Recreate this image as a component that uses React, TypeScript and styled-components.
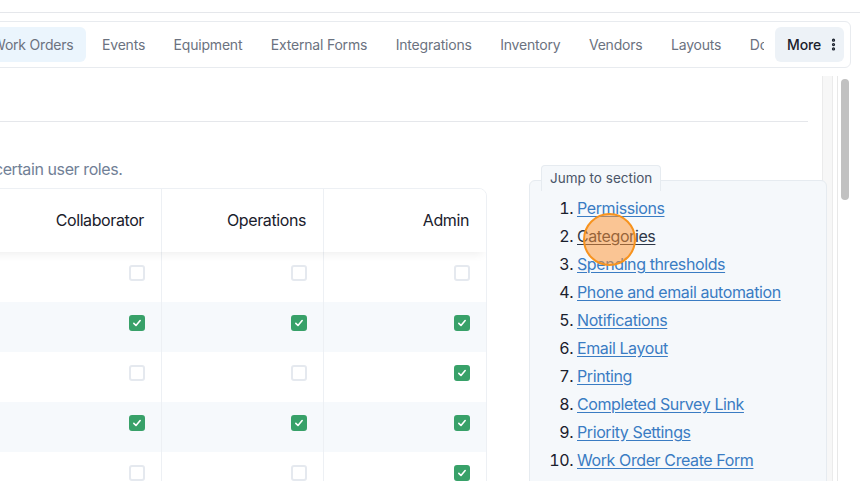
import styled, { createGlobalStyle } from "styled-components";
import { EllipsisVertical } from "lucide-react";

const GlobalStyle = createGlobalStyle`
  html, body {
    margin: 0;
    padding: 0;
    background: #ffffff;
    font-family: Inter, "Liberation Sans", sans-serif;
    letter-spacing: -0.4px;
    -webkit-font-smoothing: antialiased;
  }
`;

const tabs = [
  "Work Orders",
  "Events",
  "Equipment",
  "External Forms",
  "Integrations",
  "Inventory",
  "Vendors",
  "Layouts",
  "Documents",
];

const roles = ["Requester", "Collaborator", "Operations", "Admin"];

const permissions: { name: string; values: boolean[] }[] = [
  { name: "Assign work orders", values: [false, false, false, false] },
  { name: "View all work orders", values: [false, true, true, true] },
  { name: "Delete work orders", values: [false, false, false, true] },
  { name: "Edit work order details", values: [false, true, true, true] },
  { name: "Manage categories", values: [false, false, false, true] },
];

const sections = [
  "Permissions",
  "Categories",
  "Spending thresholds",
  "Phone and email automation",
  "Notifications",
  "Email Layout",
  "Printing",
  "Completed Survey Link",
  "Priority Settings",
  "Work Order Create Form",
];

export default function App() {
  return (
    <Root>
      <GlobalStyle />
      <TopLine />
      <TabBar>
        <TabList>
          {tabs.map((t, i) => (
            <Tab key={t} $active={i === 0}>
              {t}
            </Tab>
          ))}
        </TabList>
        <MoreButton>
          More
          <EllipsisVertical size={15} strokeWidth={3.2} />
        </MoreButton>
      </TabBar>

      <ContentRow>
        <Main>
          <Scroller>
            <Header>
              <Title>Settings</Title>
            </Header>
            <Body>
              <LeftColumn>
                <Description>
                  Configure which actions on the work order flow are available to certain user roles.
                </Description>
                <TableCard>
                  <HeaderRow>
                    <HeadCell $align="left">Permission</HeadCell>
                    {roles.map((r) => (
                      <HeadCell key={r} $align="right">
                        {r}
                      </HeadCell>
                    ))}
                  </HeaderRow>
                  {permissions.map((p, i) => (
                    <Row key={p.name} $striped={i % 2 === 1}>
                      <NameCell>{p.name}</NameCell>
                      {p.values.map((v, j) => (
                        <CheckCell key={j}>
                          <Checkbox $checked={v}>
                            {v && (
                              <svg width="10" height="10" viewBox="0 0 12 12">
                                <polyline
                                  points="2.2,6.4 4.8,9 9.8,3"
                                  fill="none"
                                  stroke="#ffffff"
                                  strokeWidth="1.9"
                                  strokeLinecap="round"
                                  strokeLinejoin="round"
                                />
                              </svg>
                            )}
                          </Checkbox>
                        </CheckCell>
                      ))}
                    </Row>
                  ))}
                </TableCard>
              </LeftColumn>

              <Sidebar>
                <JumpLabel>Jump to section</JumpLabel>
                <JumpBox>
                  <SectionList>
                    {sections.map((s, i) => (
                      <SectionItem key={s}>
                        <SectionLink href="#" $hover={i === 1}>
                          {s}
                        </SectionLink>
                      </SectionItem>
                    ))}
                  </SectionList>
                </JumpBox>
              </Sidebar>
            </Body>
          </Scroller>
        </Main>
        <ScrollTrack>
          <ScrollThumb />
        </ScrollTrack>
      </ContentRow>

      <CursorHalo />
    </Root>
  );
}

const Root = styled.div`
  position: relative;
  width: 860px;
  height: 481px;
  overflow: hidden;
  display: flex;
  flex-direction: column;
`;

const TopLine = styled.div`
  height: 12px;
  border-bottom: 1px solid #e5e7eb;
  flex: none;
`;

const TabBar = styled.div`
  flex: none;
  display: flex;
  align-items: center;
  margin: 8px 9px 0 -26px;
  padding: 5px 6px 5px 5px;
  border: 1px solid #e8ebef;
  border-radius: 6px;
  background: #ffffff;
`;

const TabList = styled.div`
  flex: 1;
  min-width: 0;
  display: flex;
  gap: 4.5px;
  overflow: hidden;
  white-space: nowrap;
  margin-right: 11px;
`;

const Tab = styled.div<{ $active?: boolean }>`
  flex: none;
  height: 35px;
  display: flex;
  align-items: center;
  padding: 0 12px;
  border-radius: 6px;
  font-size: 14px;
  letter-spacing: -0.2px;
  color: #6b7280;
  background: ${({ $active }) => ($active ? "#ebf5fd" : "transparent")};
`;

const MoreButton = styled.div`
  flex: none;
  width: 69px;
  height: 35px;
  box-sizing: border-box;
  display: flex;
  align-items: center;
  gap: 5px;
  padding-left: 12px;
  border-radius: 6px;
  background: #edf2f7;
  color: #1a202c;
  font-size: 14px;
  letter-spacing: -0.1px;
  font-weight: 500;
`;

const ContentRow = styled.div`
  flex: 1;
  min-height: 0;
  display: flex;
  margin-top: 8px;
  padding-right: 8px;
`;

const Main = styled.div`
  position: relative;
  flex: 1;
  min-width: 0;
  overflow: hidden;

  &::after {
    content: "";
    position: absolute;
    top: 0;
    bottom: 0;
    right: 4px;
    width: 9px;
    background: #f7f7f7;
    border-left: 1px solid #ebebeb;
    border-right: 1px solid #ebebeb;
  }
`;

const Scroller = styled.div`
  margin-left: -463px;
`;

const Header = styled.div`
  height: 45px;
  margin-right: 29px;
  border-bottom: 1px solid #e5e7eb;
  display: flex;
  align-items: center;
`;

const Title = styled.h2`
  margin: 0;
  font-size: 20px;
  font-weight: 600;
  color: #1a202c;
`;

const Body = styled.div`
  display: flex;
  gap: 42px;
  padding-top: 35px;
  margin-right: 10px;
`;

const LeftColumn = styled.div`
  flex: none;
  width: 950px;
`;

const Description = styled.p`
  margin: 0 0 7px;
  font-size: 16px;
  line-height: 24px;
  color: #718096;
`;

const TableCard = styled.div`
  border: 1px solid #edf0f4;
  border-radius: 8px;
  overflow: hidden;
`;

const grid = `
  display: grid;
  grid-template-columns: 300px 162px 162px 162px 1fr;
`;

const HeaderRow = styled.div`
  ${grid}
  height: 63px;
  position: relative;
  z-index: 1;
  background: #ffffff;
  box-shadow: 0 5px 9px -3px rgba(0, 0, 0, 0.07);
`;

const HeadCell = styled.div<{ $align: "left" | "right" }>`
  display: flex;
  align-items: center;
  justify-content: ${({ $align }) => ($align === "left" ? "flex-start" : "flex-end")};
  padding: 0 17px 1px;
  font-size: 16px;
  color: #1a202c;
  border-right: 1px solid #edf0f4;

  &:last-child {
    border-right: none;
  }
`;

const Row = styled.div<{ $striped?: boolean }>`
  ${grid}
  height: 50px;
  background: ${({ $striped }) => ($striped ? "#f6f9fc" : "#ffffff")};
`;

const NameCell = styled.div`
  display: flex;
  align-items: center;
  padding: 0 17px;
  font-size: 16px;
  color: #1a202c;
  border-right: 1px solid #edf0f4;
`;

const CheckCell = styled.div`
  display: flex;
  align-items: center;
  justify-content: flex-end;
  padding: 0 16px 8px 0;
  border-right: 1px solid #edf0f4;

  &:last-child {
    border-right: none;
  }
`;

const Checkbox = styled.span<{ $checked?: boolean }>`
  width: 16px;
  height: 16px;
  box-sizing: border-box;
  border-radius: 3px;
  display: flex;
  align-items: center;
  justify-content: center;
  background: ${({ $checked }) => ($checked ? "#38a169" : "#ffffff")};
  border: 2px solid ${({ $checked }) => ($checked ? "#38a169" : "#e5e9ef")};
`;

const Sidebar = styled.div`
  position: relative;
  z-index: 2;
  flex: 1;
  align-self: flex-start;
  margin-top: 8px;
  display: flex;
  flex-direction: column;
`;

const JumpLabel = styled.div`
  position: relative;
  z-index: 1;
  align-self: flex-start;
  margin: 0 0 -11px 12px;
  padding: 4px 8px;
  font-size: 13.5px;
  line-height: 17px;
  letter-spacing: 0;
  color: #4a5568;
  background: #f5f8fb;
  border: 1px solid #e6ebf0;
  border-bottom: none;
  border-radius: 4px 4px 0 0;
`;

const JumpBox = styled.div`
  background: #f5f8fb;
  border: 1px solid #e6ebf0;
  border-radius: 6px;
  padding: 13px 12px 12px;
`;

const SectionList = styled.ol`
  margin: 0;
  padding-left: 35px;
`;

const SectionItem = styled.li`
  font-size: 16px;
  line-height: 28px;
  color: #1a202c;
`;

const SectionLink = styled.a<{ $hover?: boolean }>`
  color: ${({ $hover }) => ($hover ? "#2d3748" : "#3a7cc3")};
  text-decoration: underline;
  text-underline-offset: 2px;
`;

const ScrollTrack = styled.div`
  flex: none;
  width: 14px;
  border-left: 1px solid #e8e8e8;
  display: flex;
  justify-content: center;
`;

const ScrollThumb = styled.div`
  margin-top: 3px;
  width: 8px;
  height: 121px;
  border-radius: 4px;
  background: #c1c1c1;
`;

const CursorHalo = styled.div`
  position: absolute;
  z-index: 10;
  left: 583px;
  top: 213px;
  width: 53px;
  height: 53px;
  box-sizing: border-box;
  border-radius: 50%;
  border: 2px solid #f7931e;
  background: rgba(255, 146, 45, 0.5);
  pointer-events: none;
`;
